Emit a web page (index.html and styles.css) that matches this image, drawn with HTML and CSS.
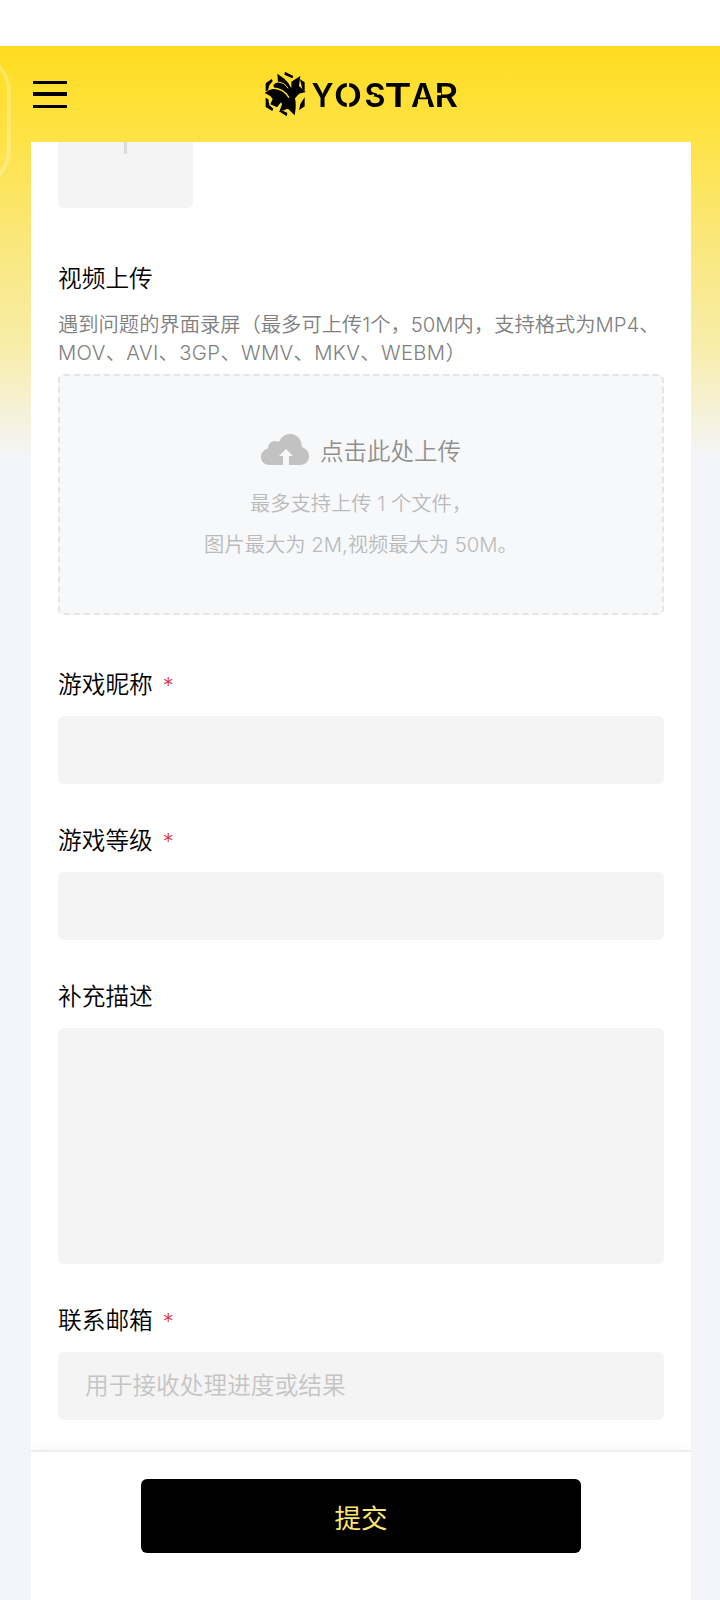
FILE: index.html
```html
<!DOCTYPE html>
<html lang="zh-CN">
<head>
<meta charset="utf-8">
<title>YOSTAR</title>
<link rel="stylesheet" href="styles.css">
</head>
<body>
<div class="app">
  <div class="statusbar"></div>
  <div class="page">
    <svg class="page-ornament" viewBox="0 0 12 130" aria-hidden="true"><path d="M-4 9Q8 22 9 34V98Q8 112 -4 125" fill="none" stroke="#fff" stroke-opacity=".25" stroke-width="4"/></svg>
    <header class="header">
      <button class="menu" aria-label="菜单"><span></span><span></span><span></span></button>
      <svg class="logo" viewBox="0 0 210 50" role="img" aria-label="YOSTAR">
        <defs>
          <mask id="cuts" maskUnits="userSpaceOnUse" x="0" y="0" width="210" height="50">
            <rect width="210" height="50" fill="#fff"/>
            <path d="M93 8v10M93 32v10M111 29l8-3M130 22l-8 3M139 18v4M163 31.500h10M181 25h5" stroke="#000" stroke-width="2.400"/>
          </mask>
        </defs>
        <g transform="translate(5 0) scale(.3333)">
          <path d="M17 43L35 30 38 36 28 49 24 64 17 67ZM17 86L25 91 28 108 40 119 37 126 17 114ZM75 8L100 21 97 28 73 17ZM120 31L134 40V66L127 60ZM134 85V112L117 124 121 105ZM57 127L66 124 82 132 80 142Z"/>
          <path d="M52 14L73 29Q88 42 94 58L94 38 121 21 117 51 137 69 117 74 105 88Q110 108 104 139L84 119 58 128 66 106 63 100 51 115 31 106 38 90 31 81 14 72Q28 60 43 59L40 48Q46 42 54 40Z"/>
          <path d="M36 57Q72 58 87 86" fill="none" stroke="#ffe132" stroke-width="4"/>
          <path d="M53 39Q74 40 84 58" fill="none" stroke="#ffe132" stroke-width="3"/>
        </g>
        <g class="wordmark" mask="url(#cuts)">
          <text x="56.500" y="37.500" textLength="22" lengthAdjust="spacingAndGlyphs">Y</text>
          <text x="79" y="37.500" textLength="28" lengthAdjust="spacingAndGlyphs">O</text>
          <text x="109.500" y="37.500" textLength="21" lengthAdjust="spacingAndGlyphs">S</text>
          <text x="129.500" y="37.500" textLength="27" lengthAdjust="spacingAndGlyphs">T</text>
          <text x="156" y="37.500" textLength="24" lengthAdjust="spacingAndGlyphs">A</text>
          <text x="179.500" y="37.500" textLength="23.500" lengthAdjust="spacingAndGlyphs">R</text>
        </g>
      </svg>
    </header>
    <main class="card">
      <div class="thumb"><span class="thumb-plus"></span></div>
      <section class="field field-video">
        <h2 class="label">视频上传</h2>
        <p class="help"><span class="help-line">遇到问题的界面录屏（最多可上传1个，50M内，支持格式为MP4、</span><span class="help-line help-formats">MOV、AVI、3GP、WMV、MKV、WEBM）</span></p>
        <div class="drop">
          <div class="drop-title">
            <svg class="cloud" viewBox="0 0 48 32" aria-hidden="true"><path d="M9 31C3.500 31 0 27.500 0 23c0-4.500 3-7.500 7-8.500C7 10 10 7 14 7q2 0 4 1C20 3 24 0 29 0c7 0 11.500 5 12 13 4 1.500 7 4.500 7 9 0 5-3.500 9-9 9H28V22h4l-7-7-7 7h4v9z" fill="#c2c2c2"/></svg>
            <span>点击此处上传</span>
          </div>
          <p class="drop-note">最多支持上传 1 个文件，</p>
          <p class="drop-note">图片最大为 2M,视频最大为 50M。</p>
        </div>
      </section>
      <section class="field field-name">
        <h2 class="label">游戏昵称<span class="req">*</span></h2>
        <div class="input"></div>
      </section>
      <section class="field">
        <h2 class="label">游戏等级<span class="req">*</span></h2>
        <div class="input"></div>
      </section>
      <section class="field">
        <h2 class="label">补充描述</h2>
        <div class="input input-area"></div>
      </section>
      <section class="field">
        <h2 class="label">联系邮箱<span class="req">*</span></h2>
        <div class="input"><span class="placeholder">用于接收处理进度或结果</span></div>
      </section>
    </main>
    <footer class="footer"><button class="submit">提交</button></footer>
  </div>
</div>
</body>
</html>
```

FILE: styles.css
```css
* { box-sizing: border-box; margin: 0; padding: 0; }
body { background: #f4f5fa; font-family: Inter, "Noto Sans CJK SC", sans-serif; font-weight: 350; color: #000; }
button { border: 0; background: none; font: inherit; }
.app { width: 720px; height: 1600px; overflow: hidden; display: flex; flex-direction: column; }
.statusbar { height: 46px; background: #fff; flex: none; }
.page { position: relative; flex: 1; display: flex; flex-direction: column; background: linear-gradient(#ffdc1e 0, #fee348 96px, #fae778 190px, #f8eda9 300px, #f4f5fa 414px); }
.page-ornament { position: absolute; left: 0; top: 8px; width: 12px; height: 130px; }
.header { height: 96px; flex: none; display: grid; grid-template-columns: 255px 210px; align-items: center; }
.menu { width: 34px; height: 27px; margin-left: 33px; display: flex; flex-direction: column; justify-content: space-between; }
.menu span { height: 3px; background: #000; }
.menu span:nth-child(2) { height: 4px; }
.logo { width: 210px; height: 50px; }
.wordmark { font: 600 33px Inter, sans-serif; }
.card { width: 660px; height: 1308px; flex: none; margin-left: 31px; padding: 0 27px; background: #fff; display: flex; flex-direction: column; }
.thumb { width: 135px; height: 66px; flex: none; background: #f4f4f4; border-radius: 0 0 5px 5px; display: flex; justify-content: center; }
.thumb-plus { width: 3px; height: 12px; background: #dadada; }
.field { margin-top: 40px; }
.field-video { margin-top: 54px; }
.field-name { margin-top: 53px; }
.label { height: 34px; line-height: 34px; margin-bottom: 14px; font-size: 23.7px; font-weight: 350; display: flex; }
.field-video .label { margin-bottom: 15px; line-height: 33px; }
.req { color: #d53a45; font-size: 22px; margin-left: 10px; line-height: 34px; }
.help { height: 63px; font-size: 20.3px; line-height: 28px; color: #808080; }
.help-line { display: block; white-space: nowrap; }
.help-formats { letter-spacing: .35px; }
.drop { height: 241px; background: #f7f8fa; border: 2px dashed #e5e5e5; border-radius: 6px; padding-top: 55px; text-align: center; }
.drop-title { height: 37px; margin-bottom: 15px; display: flex; justify-content: center; align-items: center; gap: 11px; font-size: 23.5px; color: #909090; }
.cloud { width: 48px; height: 32px; }
.drop-note { height: 41px; line-height: 41px; font-size: 20.3px; color: #bababa; }
.input { height: 68px; background: #f4f4f4; border-radius: 6px; padding: 0 27px 4px; display: flex; align-items: center; font-size: 23.7px; }
.input-area { height: 236px; }
.placeholder { color: #c4c4c4; }
.footer { position: relative; width: 660px; flex: 1; margin-left: 31px; padding-top: 27px; background: #fff; border-top: 2px solid #ededee; box-shadow: 0 -6px 14px -6px rgba(0,0,0,.06); clip-path: inset(-20px 0 0 0); }
.submit { display: block; width: 440px; height: 74px; margin: 0 auto; background: #000; border-radius: 6px; color: #ffe56b; font-size: 26.5px; font-weight: 400; }
```
